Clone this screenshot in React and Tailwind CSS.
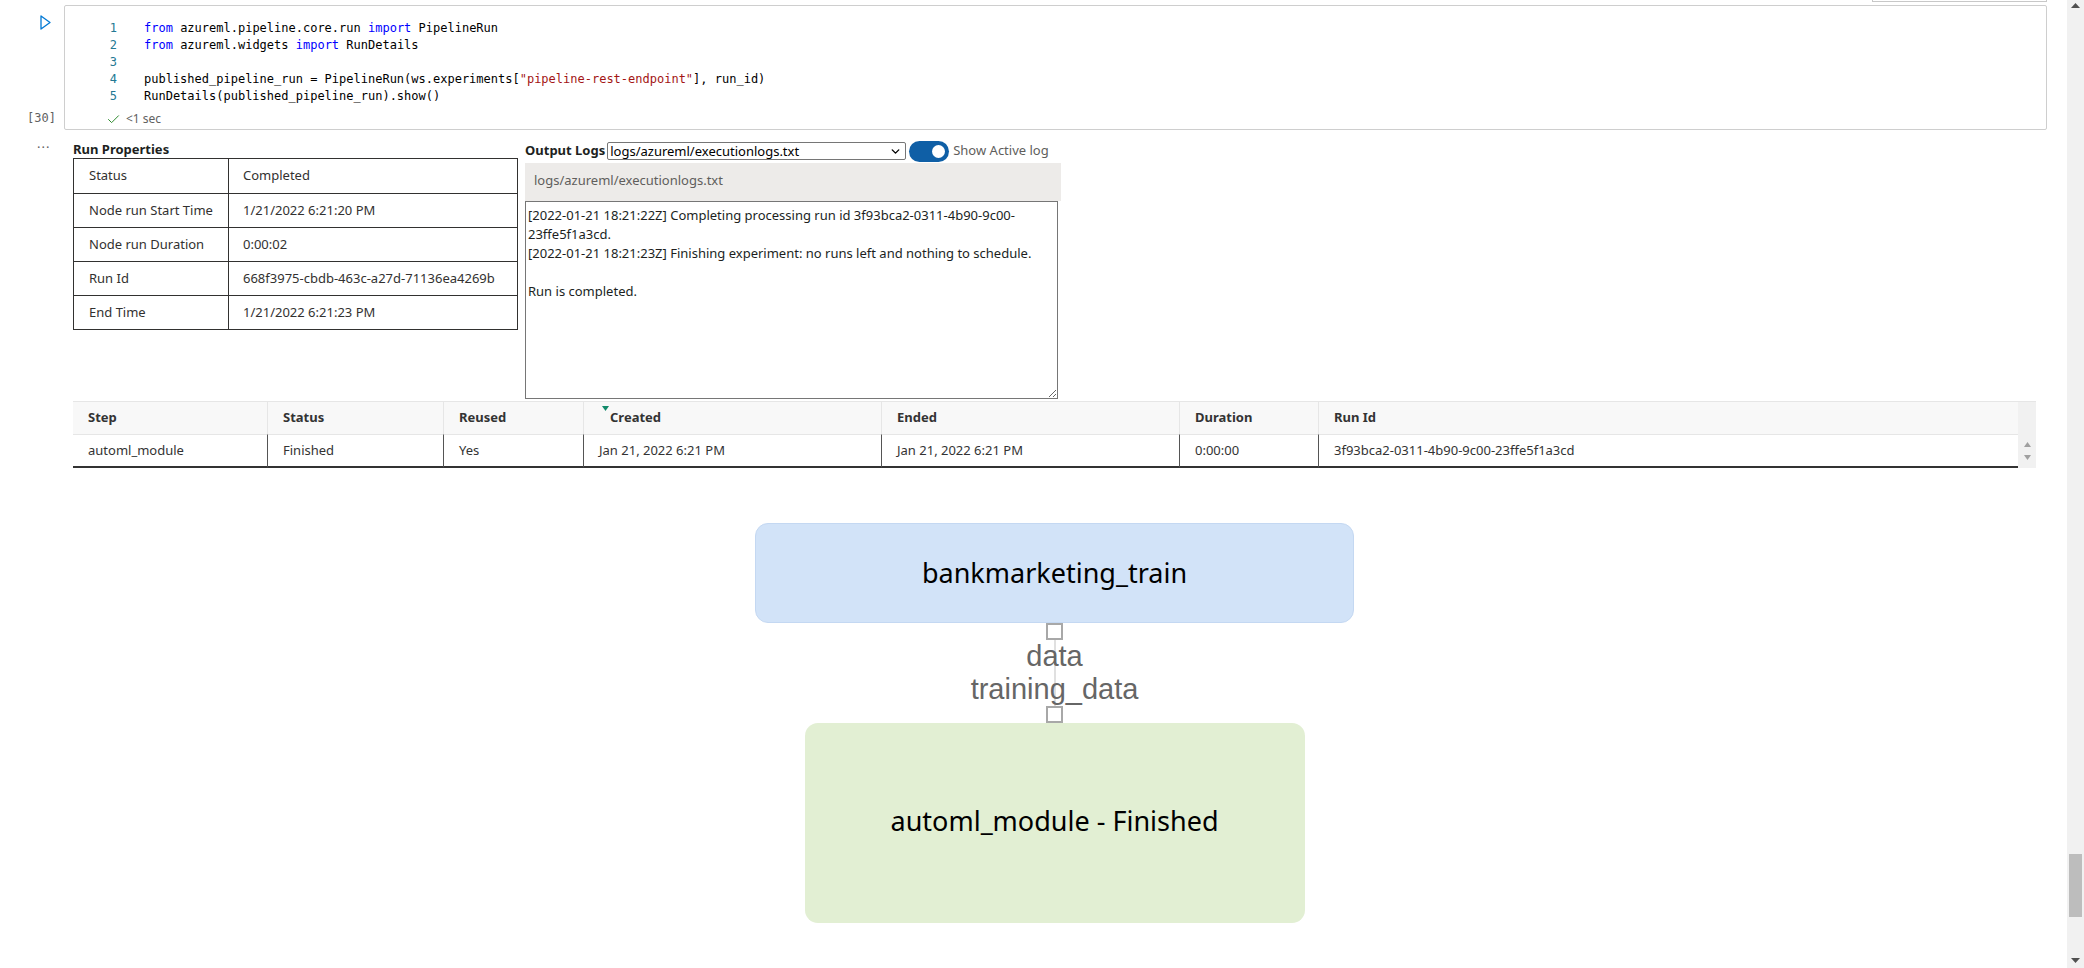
import React from 'react';
import { Check, ChevronDown } from 'lucide-react';

const code = [
  [['kw', 'from'], ['', ' azureml.pipeline.core.run '], ['kw', 'import'], ['', ' PipelineRun']],
  [['kw', 'from'], ['', ' azureml.widgets '], ['kw', 'import'], ['', ' RunDetails']],
  [],
  [['', 'published_pipeline_run = PipelineRun(ws.experiments['], ['str', '"pipeline-rest-endpoint"'], ['', '], run_id)']],
  [['', 'RunDetails(published_pipeline_run).show()']],
];

const props = [
  ['Status', 'Completed'],
  ['Node run Start Time', '1/21/2022 6:21:20 PM'],
  ['Node run Duration', '0:00:02'],
  ['Run Id', '668f3975-cbdb-463c-a27d-71136ea4269b'],
  ['End Time', '1/21/2022 6:21:23 PM'],
];

const stepCols = [
  { label: 'Step', value: 'automl_module' },
  { label: 'Status', value: 'Finished' },
  { label: 'Reused', value: 'Yes' },
  { label: 'Created', value: 'Jan 21, 2022 6:21 PM', sorted: true },
  { label: 'Ended', value: 'Jan 21, 2022 6:21 PM' },
  { label: 'Duration', value: '0:00:00' },
  { label: 'Run Id', value: '3f93bca2-0311-4b90-9c00-23ffe5f1a3cd' },
];

const logText =
  '[2022-01-21 18:21:22Z] Completing processing run id 3f93bca2-0311-4b90-9c00-\n' +
  '23ffe5f1a3cd.\n' +
  '[2022-01-21 18:21:23Z] Finishing experiment: no runs left and nothing to schedule.\n' +
  '\n' +
  'Run is completed.';

function CodeCell() {
  return (
    <div className="flex h-[125px] shrink-0">
      {/* gutter */}
      <div className="w-[64px] shrink-0 flex flex-col">
        <svg width="11" height="15" viewBox="0 0 11 15" className="ml-[40px] mt-[10px]">
          <path d="M1 1 L10 7.5 L1 14 Z" fill="none" stroke="#0078d4" strokeWidth="1.3" strokeLinejoin="round" />
        </svg>
        <div className="flex-1" />
        <div className="ml-[27px] mb-[4px] h-[16px] leading-[16px] text-[12px] text-[#616161] font-['DejaVu_Sans_Mono',monospace]">
          [30]
        </div>
      </div>

      {/* cell */}
      <div className="flex-1 mr-[20px] border border-[#cecece] rounded-[2px] flex flex-col">
        <div className="pt-[14px] font-['DejaVu_Sans_Mono',monospace] text-[12px] leading-[17px]">
          {code.map((line, i) => (
            <div key={i} className="flex h-[17px]">
              <span className="w-[52px] text-right text-[#237893]">{i + 1}</span>
              <span className="ml-[27px] whitespace-pre text-black">
                {line.map(([t, s], j) => (
                  <span key={j} className={t === 'kw' ? 'text-[#0000ff]' : t === 'str' ? 'text-[#a31515]' : ''}>
                    {s}
                  </span>
                ))}
              </span>
            </div>
          ))}
        </div>
        <div className="mt-[6px] pl-[41px] flex items-center gap-[5px] h-[16px] text-[12px] text-[#616161]">
          <Check size={15} strokeWidth={1.6} className="text-[#2e8b2e]" />
          <span>&lt;1 sec</span>
        </div>
      </div>
    </div>
  );
}

function RunProperties() {
  return (
    <div className="w-[445px] shrink-0">
      <div className="h-[18px] leading-[18px] text-[13px] font-bold text-[#201f1e]">Run Properties</div>
      <div className="border border-[#323130]">
        {props.map(([k, v], i) => (
          <div key={k} className={`flex h-[34px] items-center text-[13px] text-[#323130] ${i > 0 ? 'border-t border-[#323130]' : ''}`}>
            <div className="w-[155px] h-full flex items-center pl-[15px] border-r border-[#323130]">{k}</div>
            <div className="pl-[14px]">{v}</div>
          </div>
        ))}
      </div>
    </div>
  );
}

function OutputLogs() {
  return (
    <div className="ml-[7px] w-[536px] shrink-0">
      <div className="flex items-center h-[22px]">
        <span className="text-[13px] font-bold text-[#201f1e]">Output Logs</span>
        <div className="ml-[2px] w-[299px] h-[18px] border border-[#767676] rounded-[2px] flex items-center justify-between pl-[2px] pr-[3px] text-[13px] text-black">
          <span className="leading-[16px]">logs/azureml/executionlogs.txt</span>
          <ChevronDown size={13} strokeWidth={2.6} />
        </div>
        <div className="ml-[3px] w-[40px] h-[21px] rounded-full bg-[#0f5fa6] flex items-center justify-end pr-[4px]">
          <div className="w-[13px] h-[13px] rounded-full bg-white" />
        </div>
        <span className="ml-[4px] text-[13px] text-[#605e5c]">Show Active log</span>
      </div>
      <div className="mt-[1px] h-[38px] bg-[#edebe9] flex items-center pl-[9px] pb-[2px] text-[13px] text-[#605e5c]">
        logs/azureml/executionlogs.txt
      </div>
      <textarea
        readOnly
        wrap="off"
        value={logText}
        className="block w-[533px] h-[198px] border border-[#767676] px-[2px] pt-[4px] pb-[2px] text-[13px] leading-[19px] text-[#201f1e] resize overflow-hidden outline-none font-['Noto_Sans',sans-serif]"
      />
    </div>
  );
}

function StepsTable() {
  return (
    <div className="mt-[2px] flex">
      <div className="grid grid-cols-[194px_176px_140px_298px_298px_139px_700px]">
        {stepCols.map((c, i) => (
          <div
            key={c.label}
            className={`h-[33px] bg-[#f8f8f8] border-t border-[#e6e6e6] flex items-center text-[13px] font-bold text-[#333] ${i > 0 ? 'border-l' : ''} ${
              c.sorted ? 'pl-[26px] relative' : 'pl-[15px]'
            }`}
          >
            {c.sorted && (
              <svg width="7" height="5" viewBox="0 0 7 5" className="absolute left-[18px] top-[4px]">
                <path d="M0 0 L7 0 L3.5 5 Z" fill="#128a6a" />
              </svg>
            )}
            {c.label}
          </div>
        ))}
        {stepCols.map((c, i) => (
          <div
            key={c.label + 'v'}
            className={`h-[34px] bg-white border-t border-[#e6e6e6] border-b-2 border-b-[#333] flex items-center text-[13px] text-[#333] pl-[15px] ${
              i > 0 ? 'border-l border-l-[#555]' : ''
            }`}
          >
            {c.value}
          </div>
        ))}
      </div>
      <div className="w-[18px] h-[67px] bg-[#f1f1f1] border-t border-[#e6e6e6] flex flex-col items-center pt-[40px] gap-[8px]">
        <svg width="7" height="5" viewBox="0 0 7 5"><path d="M0 5 L7 5 L3.5 0 Z" fill="#a0a0a0" /></svg>
        <svg width="7" height="5" viewBox="0 0 7 5"><path d="M0 0 L7 0 L3.5 5 Z" fill="#a0a0a0" /></svg>
      </div>
    </div>
  );
}

function Graph() {
  return (
    <div className="mt-[55px] w-[1963px] flex flex-col items-center">
      <div className="w-[599px] h-[100px] rounded-[13px] bg-[#d2e3f8] border border-[#c4d8f2] flex items-center justify-center text-[27px] text-black">
        bankmarketing_train
      </div>
      <div className="relative flex flex-col items-center">
        <div className="absolute left-1/2 top-[17px] bottom-[17px] w-px -translate-x-1/2 bg-[#c2c2c2]" />
        <div className="w-[17px] h-[17px] border-2 border-[#a8a8a8] bg-white" />
        <div className="relative text-[29px] leading-[33px] text-[#666] text-center font-['Liberation_Sans',sans-serif]">
          <div>data</div>
          <div>training_data</div>
        </div>
        <div className="w-[17px] h-[17px] border-2 border-[#a8a8a8] bg-white" />
      </div>
      <div className="w-[500px] h-[200px] rounded-[13px] bg-[#e2efd3] flex items-center justify-center pb-[4px] text-[27px] text-black">
        automl_module - Finished
      </div>
    </div>
  );
}

export default function App() {
  return (
    <div className="flex h-[968px] w-[2084px] overflow-hidden bg-white font-['Noto_Sans',sans-serif]">
      <div className="flex-1 min-w-0 flex flex-col">
        <div className="h-[5px] shrink-0 flex">
          <div className="ml-auto mr-[20px] w-[175px] h-[2px] border-b border-x border-[#c8c8c8]" />
        </div>
        <CodeCell />
        <div className="flex pt-[10px]">
          <div className="w-[73px] shrink-0 pl-[37px] leading-[14px] text-[13px] text-[#616161] tracking-[1px]">···</div>
          <div className="flex flex-col">
            <div className="flex items-start">
              <RunProperties />
              <OutputLogs />
            </div>
            <StepsTable />
            <Graph />
          </div>
        </div>
      </div>
      {/* page scrollbar */}
      <div className="w-[17px] shrink-0 h-full bg-[#f1f1f1] flex flex-col items-center">
        <svg width="9" height="5" viewBox="0 0 9 5" className="mt-[3px]"><path d="M0 5 L9 5 L4.5 0 Z" fill="#505050" /></svg>
        <div className="flex-1" />
        <div className="w-[13px] h-[63px] bg-[#bdbdbd]" />
        <div className="h-[41px]" />
        <svg width="9" height="5" viewBox="0 0 9 5" className="mb-[5px]"><path d="M0 0 L9 0 L4.5 5 Z" fill="#505050" /></svg>
      </div>
    </div>
  );
}
